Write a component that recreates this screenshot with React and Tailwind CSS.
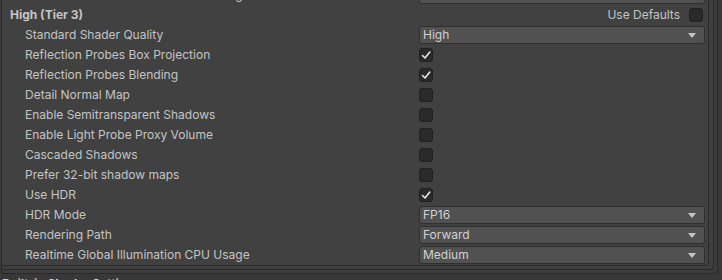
import React from 'react';

const Check = () => (
  <svg className="w-[10px] h-[10px]" viewBox="0 0 10 10" fill="none">
    <path d="M1.5 5.5 L4 8 L8.8 2" stroke="#e6e6e6" strokeWidth="1.6" strokeLinecap="round" strokeLinejoin="round" />
  </svg>
);

const Toggle = ({ on }) => (
  <div className="w-[14px] h-[14px] rounded-[3px] bg-[#2a2a2a] border border-[#212121] flex items-center justify-center">
    {on && <Check />}
  </div>
);

const Dropdown = ({ value }) => (
  <div className="w-[286px] h-[18px] rounded-[3px] bg-[#515151] border border-[#2f2f2f] flex items-center justify-between pl-[3px] pr-[8px] text-[#d2d2d2]">
    <span>{value}</span>
    <svg className="w-[8px] h-[5px]" viewBox="0 0 8 5">
      <path d="M0 0 H8 L4 5 Z" fill="#c4c4c4" />
    </svg>
  </div>
);

const rows = [
  { label: 'Standard Shader Quality', dropdown: 'High' },
  { label: 'Reflection Probes Box Projection', check: true },
  { label: 'Reflection Probes Blending', check: true },
  { label: 'Detail Normal Map', check: false },
  { label: 'Enable Semitransparent Shadows', check: false },
  { label: 'Enable Light Probe Proxy Volume', check: false },
  { label: 'Cascaded Shadows', check: false },
  { label: 'Prefer 32-bit shadow maps', check: false },
  { label: 'Use HDR', check: true },
  { label: 'HDR Mode', dropdown: 'FP16' },
  { label: 'Rendering Path', dropdown: 'Forward' },
  { label: 'Realtime Global Illumination CPU Usage', dropdown: 'Medium' },
];

const Row = ({ label, children }) => (
  <div className="h-[20px] flex items-center">
    <div className="w-[416px] pl-[22px] shrink-0">{label}</div>
    <div className="flex items-center">{children}</div>
  </div>
);

export default function App() {
  return (
    <div
      className="w-[722px] h-[280px] overflow-hidden bg-[#383838] text-[12px] text-[#c4c4c4]"
      style={{ fontFamily: 'Inter, "Noto Sans", sans-serif' }}
    >
      <div className="w-[717px] mt-[-15px] ml-[1px] border-l border-r border-b border-[#2a2a2a] rounded-b-[4px] pr-[3px] pb-[3px] bg-[#3c3c3c]">
        <div className="border-r border-b border-[#2a2a2a] rounded-br-[4px] pr-[4px] pb-[3px] bg-[#3f3f3f]">
          <div className="pl-[1px] border-r border-b border-[#2a2a2a] rounded-br-[4px] bg-[#414141]">
            {/* previous tier tail */}
            <Row label="Realtime Global Illumination CPU Usage">
              <Dropdown value="Low" />
            </Row>
            <div className="h-[20px] flex items-center">
              <div className="pl-[7px] font-bold flex-1">High (Tier 3)</div>
              <span className="mr-[9px]">Use Defaults</span>
              <div className="mr-[5px]">
                <Toggle on={false} />
              </div>
            </div>
            {rows.map((r) => (
              <Row key={r.label} label={r.label}>
                {r.dropdown ? <Dropdown value={r.dropdown} /> : <Toggle on={r.check} />}
              </Row>
            ))}
          </div>
        </div>
      </div>
      <div className="pl-[2px] mt-[1px] font-bold text-[#d0d0d0]">Built-in Shader Settings</div>
    </div>
  );
}
